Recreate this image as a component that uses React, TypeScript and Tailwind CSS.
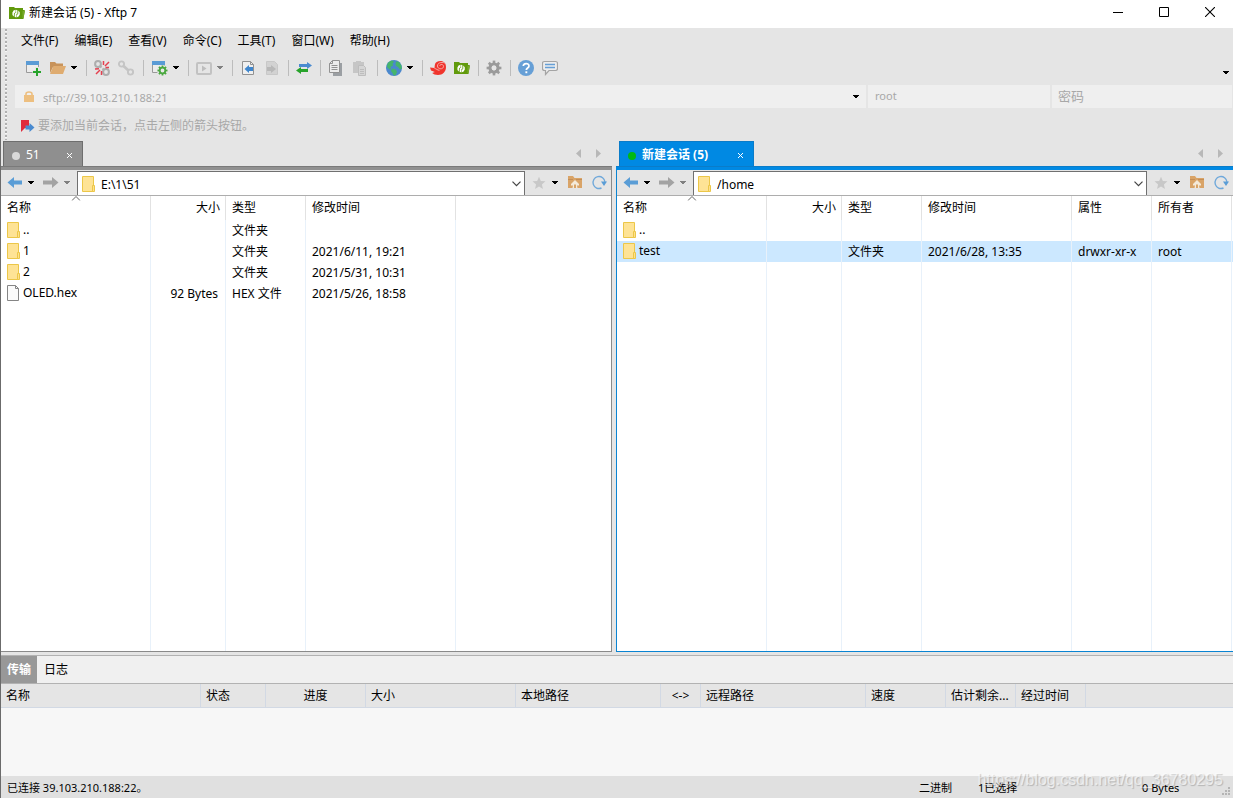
import React from "react";

type Children = { children?: React.ReactNode };

function Caret({ className = "text-black" }: { className?: string }) {
  return (
    <svg width="6" height="3" viewBox="0 0 6 3" className={className} aria-hidden="true" shapeRendering="crispEdges">
      <path d="M0 0h6v1H5v1H4v1H2V2H1V1H0z" fill="currentColor" />
    </svg>
  );
}

function Icon({ children, size = 16 }: Children & { size?: number }) {
  return (
    <svg width={size} height={size} viewBox="0 0 16 16" fill="none" aria-hidden="true">
      {children}
    </svg>
  );
}

const XftpIcon = () => (
  <Icon>
    <path d="M0 2h5l1 1h8v2h1.800L14.500 14H0z" fill="#619a0c" />
    <path d="M13.500 6h2.500l-1.500 7h-1z" fill="#76a92c" />
    <path d="M6.600 4.800a3.800 3.800 0 0 0-1.800 6.800l.2-3.400 1.600-1z" fill="#fff" />
    <path d="M7.500 12.400a3.800 3.800 0 0 0 1.800-6.900l-.1 3.500-1.700 1z" fill="#fff" />
    <path d="M5.700 12V8.500l1.300-1v4.800zM8.400 5.200v3.500l-1.300 1V4.800z" fill="#fff" />
  </Icon>
);

const NewSessionIcon = () => (
  <Icon>
    <path d="M.5 2.500h12v10H.5z" fill="#ececec" stroke="#9a9a9a" />
    <path d="M0 1h13v4H0z" fill="#5a9bd5" />
    <path d="M11 7v9M6.500 12h9" stroke="#e5e5e5" strokeWidth="4" />
    <path d="M11 8v8M7 12h8" stroke="#27a32b" strokeWidth="2" />
  </Icon>
);

const OpenIcon = () => (
  <Icon>
    <path d="M0 2h5l1.500 1.500H13V7H3L0 13z" fill="#c8935a" />
    <path d="M3.500 6H16l-3 8H0z" fill="#dfac70" />
  </Icon>
);

const BrokenLinkIcon = () => (
  <Icon>
    <circle cx="4" cy="4" r="2.900" stroke="#adadad" strokeWidth="2" />
    <path d="m6 6 1.500 1.500M8.500 8.500 10 10" stroke="#adadad" strokeWidth="2" />
    <circle cx="12" cy="12" r="2.900" stroke="#adadad" strokeWidth="2" />
    <path d="M9.500 1v4M15 2l-4 4M11.500 7.500H15M1 9l4-.3M2 14l4-4M7.500 11v4" stroke="#e4404f" strokeWidth="1.500" />
  </Icon>
);

const LinkIcon = () => (
  <Icon>
    <circle cx="3.500" cy="4" r="2.600" stroke="#c5c5c5" strokeWidth="1.900" />
    <path d="m5.500 6 5 4.500" stroke="#c5c5c5" strokeWidth="2.800" />
    <circle cx="12.500" cy="12" r="2.600" stroke="#c5c5c5" strokeWidth="1.900" />
  </Icon>
);

function Teeth({ cx, cy, r, color, width }: { cx: number; cy: number; r: number; color: string; width: number }) {
  return (
    <g stroke={color} strokeWidth={width}>
      {[0, 45, 90, 135].map((a) => (
        <path key={a} d={`M${cx - r} ${cy}h${r * 2}`} transform={`rotate(${a} ${cx} ${cy})`} />
      ))}
    </g>
  );
}

const SessionPropsIcon = () => (
  <Icon>
    <path d="M.5 2.500h12v10H.5z" fill="#ececec" stroke="#9a9a9a" />
    <path d="M0 1h13v4H0z" fill="#5a9bd5" />
    <circle cx="10.500" cy="10.500" r="5.500" fill="#e5e5e5" />
    <Teeth cx={10.5} cy={10.5} r={5} color="#4aa83f" width={1.8} />
    <circle cx="10.500" cy="10.500" r="2.800" fill="#e8e8e8" stroke="#4aa83f" strokeWidth="1.800" />
  </Icon>
);

const RunIcon = () => (
  <Icon>
    <rect x="1" y="3" width="14" height="11" rx="1" stroke="#c2c2c2" strokeWidth="2" />
    <path d="M6 5.500v6l4.500-3z" fill="#bdbdbd" />
  </Icon>
);

const PageLeftIcon = () => (
  <Icon>
    <path d="M2.500 1.500h8l3 3v10h-11z" fill="#efefef" stroke="#929292" />
    <path d="M10.500 1.500v3h3" stroke="#929292" />
    <path d="M9 5v2h4v4H9v2L4.500 9z" fill="#3f86cd" />
  </Icon>
);

const PageRightIcon = () => (
  <Icon>
    <path d="M2.500 1.500h8l3 3v10h-11z" fill="#d2d2d2" stroke="#c8c8c8" />
    <path d="M7 5v2H3v4h4v2l5-4z" fill="#b8b8b8" />
  </Icon>
);

const SyncIcon = () => (
  <Icon>
    <path d="M11 2 16 5.500 11 9V7H3V4h8z" fill="#4a8bd0" />
    <path d="M5 7 0 10.500 5 14v-2h7V9H5z" fill="#27a32b" />
  </Icon>
);

const CopyIcon = () => (
  <Icon>
    <path d="M5 3h9v13H5z" fill="#9b9fa3" />
    <path d="M4.500.5h7v12h-10v-9z" fill="#ececec" stroke="#929292" />
    <path d="M4.500.5v3h-3M3.500 5.500h6M3.500 7.500h6M3.500 9.500h6" stroke="#929292" />
  </Icon>
);

const PasteIcon = () => (
  <Icon>
    <path d="M1 2h3V1h5v1h3v11H1z" fill="#c6c6c6" />
    <path d="M6.500 5.500h5l2 2v8h-7z" fill="#d5d5d5" stroke="#bdbdbd" />
    <path d="M8 9.500h4M8 11.500h4M8 13.500h4" stroke="#bdbdbd" />
  </Icon>
);

const GlobeIcon = () => (
  <Icon>
    <circle cx="8" cy="8" r="8" fill="#4b88cd" />
    <path d="M1.500 3.500C3 1.500 5 .8 6.500.5L8 2 6.500 3.500l.5 2L4.500 7 5 9 3.500 9.500 1 7zM10 1.500l3 .3 2.500 4 .3 3L14 9.500 12 7 10 6 9.500 4zM6 8.500l4 1 1 2.500-1.500 3.500-2-.3L6.500 13 5 11z" fill="#45b56b" />
  </Icon>
);

const XshellIcon = () => (
  <Icon>
    <path d="M0 7.500 4.500 8 4.800 5C5.300 2 7.500 1 10.500 1 14 1 16 3.500 16 7c0 4.500-3.200 8-8 8-2.600 0-4.600-.8-5.800-2L4.800 12 1 10.500z" fill="#f0352d" />
    <path d="M15.300 3.500C13.500 1.600 7.500 2 7.500 6c0 3.600 6 3.800 6 .3 0-2.300-3.500-2.500-3.700-.5M4.500 8.500c2 .1 2.600 1.800 5 1.800" stroke="#f6aba7" />
  </Icon>
);

const GearIcon = () => (
  <Icon>
    <Teeth cx={8} cy={8} r={7.4} color="#9c9c9c" width={2.6} />
    <circle cx="8" cy="8" r="4" fill="#e5e5e5" stroke="#9a9a9a" strokeWidth="3.200" />
    <circle cx="8" cy="8" r="2.400" fill="#e5e5e5" />
  </Icon>
);

const HelpIcon = () => (
  <Icon>
    <circle cx="8" cy="8" r="8" fill="#669fd6" />
    <path d="M5.300 6.100C5.300 2.800 11 2.700 11 6c0 2-2.700 2-2.700 4" stroke="#fff" strokeWidth="1.700" />
    <path d="M7.400 11.300h1.900v1.900H7.400z" fill="#fff" />
  </Icon>
);

const ChatIcon = () => (
  <Icon>
    <path d="M2.500 1.500h11q2 0 2 2v5q0 2-2 2H7l-3.500 4v-4h-1q-2 0-2-2v-5q0-2 2-2z" fill="#ededed" stroke="#a4a4a4" strokeWidth="1.200" />
    <path d="M3 4.500h10M3 7.500h10" stroke="#669fd6" strokeWidth="1.600" />
  </Icon>
);

const ArrowIcon = ({ forward = false }: { forward?: boolean }) => (
  <Icon>
    {forward ? (
      <path d="M9 2v3.500H0v4h9V13l6.500-5.500z" fill="#a3a3a3" />
    ) : (
      <path d="M7 2v3.500h8v4H7V13L.5 7.500z" fill="#5a9dd6" />
    )}
  </Icon>
);

const StarIcon = () => (
  <Icon size={14}>
    <path d="m8 .8 2.100 4.900 5.300.4-4.100 3.500 1.300 5.200L8 12l-4.600 2.800 1.300-5.200L.6 6.100l5.300-.4z" fill="#c8c8c8" />
  </Icon>
);

const UpFolderIcon = () => (
  <Icon>
    <path d="M1 1h5l1.500 2H15v10H1z" fill="#d9a468" />
    <path d="M1 4.500h5M9 4.500h6" stroke="#c58e55" />
    <path d="M8 5 4 9v1.500h2L5.500 13H7V9.500h2V13h1.500L10 10.500h2V9z" fill="#f4ead9" />
  </Icon>
);

const RefreshIcon = () => (
  <Icon>
    <path d="M10.500 13A6 6 0 1 1 14 7" stroke="#6fa8da" strokeWidth="1.400" />
    <path d="M10 6.500h6L13 11z" fill="#5a9dd6" />
  </Icon>
);

const FolderIcon = () => (
  <svg width="14" height="16" viewBox="0 0 14 16" aria-hidden="true" className="shrink-0">
    <path d="M.5.5h11v15H.5z" fill="#fee395" stroke="#ecc748" />
    <path d="M10.500 9.500h2v6h-2z" fill="#fee08c" stroke="#ecc748" />
  </svg>
);

const FileIcon = () => (
  <svg width="14" height="16" viewBox="0 0 14 16" aria-hidden="true" className="shrink-0">
    <path d="M.5.5h8l3 3v12H.5z" fill="#fafafa" stroke="#858585" />
    <path d="M8.500.5v3h3" fill="none" stroke="#858585" />
  </svg>
);

const TriIcon = ({ right = false }: { right?: boolean }) => (
  <svg width="5" height="9" viewBox="0 0 5 9" aria-hidden="true">
    <path d={right ? "M0 0v9l5-4.500z" : "M5 0v9L0 4.500z"} fill="#b8b8b8" />
  </svg>
);

const CloseIcon = () => (
  <svg width="7" height="7" viewBox="0 0 7 7" aria-hidden="true">
    <path d="m1 1 5 5M6 1 1 6" stroke="#fff" />
  </svg>
);

const ChevronIcon = () => (
  <svg width="9" height="6" viewBox="0 0 9 6" fill="none" aria-hidden="true">
    <path d="m.5.7 4 4 4-4" stroke="#444" strokeWidth="1.200" />
  </svg>
);

const FlagIcon = () => (
  <svg width="14" height="14" viewBox="0 0 14 14" aria-hidden="true">
    <path d="M0 1h8v8H4l-4 4z" fill="#e02b3c" />
    <path d="M8.500 4v2.500H4.500v4h4V13l5-4.500z" fill="#4a8bd0" />
  </svg>
);

const LockIcon = () => (
  <svg width="10" height="11" viewBox="0 0 10 11" aria-hidden="true">
    <path d="M2 5V3q0-2 3-2t3 2v2" fill="none" stroke="#edbf80" strokeWidth="1.600" />
    <path d="M0 4h10v7H0z" fill="#edbf80" />
  </svg>
);

function ToolButton({ label, children }: Children & { label: string }) {
  return (
    <button aria-label={label} className="flex size-6 shrink-0 items-center justify-center">
      {children}
    </button>
  );
}

function MenuCaret({ label, dim = false }: { label: string; dim?: boolean }) {
  return (
    <button aria-label={label} className="flex h-6 w-3 shrink-0 items-center pl-px">
      <Caret className={dim ? "text-[#808080]" : "text-black"} />
    </button>
  );
}

const Separator = ({ wide = false }: { wide?: boolean }) => (
  <span className={`flex shrink-0 justify-center ${wide ? "w-2.5" : "w-2"}`}>
    <span className="h-4 w-px bg-[#bcbcbc]" />
  </span>
);

function Bar({ className, children }: Children & { className: string }) {
  return (
    <div className={`flex shrink-0 items-center pl-1 ${className}`}>
      <span className="my-px mr-2 w-[2px] self-stretch bg-[repeating-linear-gradient(to_bottom,#b0b0b0_0_2px,#f6f6f6_2px_3px,#e5e5e5_3px_4px)]" />
      {children}
    </div>
  );
}

type Column = { name: string; width: string; right?: boolean };
type Entry = { name: string; file?: boolean; selected?: boolean; cells: string[] };

const localColumns: Column[] = [
  { name: "名称", width: "w-[150px]" },
  { name: "大小", width: "w-[75px]", right: true },
  { name: "类型", width: "w-[80px]" },
  { name: "修改时间", width: "w-[150px]" },
];
const remoteColumns: Column[] = [
  ...localColumns,
  { name: "属性", width: "w-[80px]" },
  { name: "所有者", width: "w-[80px]" },
];
const localEntries: Entry[] = [
  { name: "..", cells: ["", "文件夹", ""] },
  { name: "1", cells: ["", "文件夹", "2021/6/11, 19:21"] },
  { name: "2", cells: ["", "文件夹", "2021/5/31, 10:31"] },
  { name: "OLED.hex", file: true, cells: ["92 Bytes", "HEX 文件", "2021/5/26, 18:58"] },
];
const remoteEntries: Entry[] = [
  { name: "..", cells: ["", "", "", "", ""] },
  { name: "test", selected: true, cells: ["", "文件夹", "2021/6/28, 13:35", "drwxr-xr-x", "root"] },
];

function FileTable({ columns, entries, spare }: { columns: Column[]; entries: Entry[]; spare?: boolean }) {
  return (
    <table className="h-full w-full table-fixed border-separate border-spacing-0">
      <colgroup>
        {columns.map((c) => (
          <col key={c.name} className={c.width} />
        ))}
        {spare && <col />}
      </colgroup>
      <thead>
        <tr className="h-6">
          {columns.map((c, i) => (
            <th
              key={c.name}
              className={`relative h-6 border-r border-[#e2e2e2] p-0 font-normal ${c.right ? "pr-[5px] text-right" : "pl-1.5 text-left"}`}
            >
              {c.name}
              {i === 0 && (
                <svg width="9" height="5" viewBox="0 0 9 5" fill="none" aria-hidden="true" className="absolute top-0 left-1/2 -translate-x-1/2">
                  <path d="m.5 4.500 4-4 4 4" stroke="#666" />
                </svg>
              )}
            </th>
          ))}
          {spare && <th className="p-0" />}
        </tr>
      </thead>
      <tbody>
        {entries.map((e) => (
          <tr key={e.name} className={`h-[21px] ${e.selected ? "bg-[#cce8ff]" : ""}`}>
            <td className="h-[21px] border-r border-[#e8f1fa] p-0">
              <div className="flex items-center gap-0.5 pb-px pl-1.5">
                {e.file ? <FileIcon /> : <FolderIcon />}
                {e.name}
              </div>
            </td>
            {e.cells.map((cell, i) => (
              <td key={i} className={`border-r border-[#e8f1fa] p-0 ${i === 0 ? "pr-[7px] text-right" : "pl-1.5"}`}>
                {cell}
              </td>
            ))}
            {spare && <td className="p-0" />}
          </tr>
        ))}
        <tr aria-hidden="true">
          {columns.map((c) => (
            <td key={c.name} className="border-r border-[#e8f1fa] p-0" />
          ))}
          {spare && <td className="p-0" />}
        </tr>
      </tbody>
    </table>
  );
}

type PaneProps = { title: string; path: string; columns: Column[]; entries: Entry[]; active?: boolean };

function Pane({ title, path, columns, entries, active = false }: PaneProps) {
  return (
    <section className="flex min-h-0 min-w-0 flex-col">
      <div className={`flex h-[25px] shrink-0 items-center ${active ? "pl-[3px]" : "pl-0.5"}`}>
        <div
          className={`flex h-full items-center border border-b-0 pr-[9px] pl-2 text-white ${
            active ? "w-[135px] border-[#0a7cc9] bg-[#0089e3] font-bold" : "w-20 border-[#6e6e6e] bg-[#8f8f8f]"
          }`}
        >
          <span className={`mt-1 mr-1.5 size-2 rounded-full ${active ? "bg-[#00b913]" : "bg-[#d9d9d9]"}`} />
          <button role="tab" aria-selected={active} className="flex-1 pt-px text-left whitespace-nowrap">
            {title}
          </button>
          <button aria-label="关闭" className="pt-0.5">
            <CloseIcon />
          </button>
        </div>
        <span className="flex-1" />
        <button aria-label="上一个标签" className="flex h-6 w-5 items-center justify-center">
          <TriIcon />
        </button>
        <button aria-label="下一个标签" className={`flex h-6 w-5 items-center justify-center ${active ? "mr-[3px]" : "mr-1"}`}>
          <TriIcon right />
        </button>
      </div>
      <div className={`h-1 shrink-0 border-t ${active ? "border-[#0a7cc9] bg-[#0089e3]" : "border-[#7a7a7a] bg-[#909090]"}`} />
      <div
        className={`flex min-h-0 flex-1 flex-col border-b bg-white ${
          active ? "border-l border-[#0a84d2]" : "border-r border-[#8a8a8a]"
        }`}
      >
        <div className="flex h-[26px] shrink-0 items-center border-b border-[#adadad] bg-[#e5e5e5] pl-0.5">
          <ToolButton label="后退">
            <ArrowIcon />
          </ToolButton>
          <MenuCaret label="后退历史" />
          <ToolButton label="前进">
            <ArrowIcon forward />
          </ToolButton>
          <MenuCaret label="前进历史" dim />
          <div className="ml-0.5 flex min-w-0 flex-1 items-center self-stretch border border-b-0 border-[#707070] bg-white mt-px pl-1">
            <FolderIcon />
            <input aria-label="路径" defaultValue={path} className="ml-[5px] h-5 min-w-0 flex-1 bg-transparent pt-px outline-none" />
            <button aria-label="路径列表" className="flex h-5 w-4 items-center justify-center pt-px">
              <ChevronIcon />
            </button>
          </div>
          <span className="w-0.5" />
          <ToolButton label="书签">
            <StarIcon />
          </ToolButton>
          <MenuCaret label="书签列表" />
          <ToolButton label="上级目录">
            <UpFolderIcon />
          </ToolButton>
          <ToolButton label="刷新">
            <RefreshIcon />
          </ToolButton>
        </div>
        <div className="min-h-0 flex-1">
          <FileTable columns={columns} entries={entries} spare />
        </div>
      </div>
    </section>
  );
}

const menus = ["文件(F)", "编辑(E)", "查看(V)", "命令(C)", "工具(T)", "窗口(W)", "帮助(H)"];

const transferColumns = [
  { name: "名称", width: "w-[200px]" },
  { name: "状态", width: "w-[65px]" },
  { name: "进度", width: "w-[100px]", center: true },
  { name: "大小", width: "w-[150px]" },
  { name: "本地路径", width: "w-[145px]" },
  { name: "<->", width: "w-[40px]", center: true },
  { name: "远程路径", width: "w-[165px]" },
  { name: "速度", width: "w-[80px]" },
  { name: "估计剩余...", width: "w-[70px]" },
  { name: "经过时间", width: "w-[70px]" },
];

export default function App() {
  return (
    <div className="relative flex h-screen flex-col overflow-hidden border-l border-[#6b6b6b] bg-[#e5e5e5] font-['Noto_Sans','Noto_Sans_CJK_SC',sans-serif] text-[12px] leading-4 text-black">
      <header className="flex h-7 shrink-0 items-center bg-white pl-2">
        <span className="pb-0.5">
          <XftpIcon />
        </span>
        <h1 className="ml-1 flex-1 pb-0.5">新建会话 (5) - Xftp 7</h1>
        <button aria-label="最小化" className="flex h-7 w-[46px] items-center justify-center pb-1">
          <svg width="10" height="10" viewBox="0 0 10 10"><path d="M0 5.500h10" stroke="#000" /></svg>
        </button>
        <button aria-label="最大化" className="flex h-7 w-[46px] items-center justify-center pb-1">
          <svg width="10" height="10" viewBox="0 0 10 10"><path d="M.5.5h9v9h-9z" fill="none" stroke="#000" /></svg>
        </button>
        <button aria-label="关闭窗口" className="flex h-7 w-[46px] items-center justify-center pb-1">
          <svg width="10" height="10" viewBox="0 0 10 10"><path d="m0 0 10 10M10 0 0 10" stroke="#000" strokeWidth="1.100" /></svg>
        </button>
      </header>

      <Bar className="h-[26px]">
        <nav className="flex gap-4 pl-1.5">
          {menus.map((m) => (
            <button key={m} className="whitespace-nowrap">
              {m}
            </button>
          ))}
        </nav>
      </Bar>

      <Bar className="h-[29px]">
        <div role="toolbar" aria-label="工具栏" className="flex flex-1 items-center pb-0.5 pl-[7px]">
          <ToolButton label="新建"><NewSessionIcon /></ToolButton>
          <ToolButton label="打开"><OpenIcon /></ToolButton>
          <MenuCaret label="打开列表" />
          <Separator />
          <ToolButton label="断开"><BrokenLinkIcon /></ToolButton>
          <ToolButton label="重新连接"><LinkIcon /></ToolButton>
          <Separator wide />
          <ToolButton label="属性"><SessionPropsIcon /></ToolButton>
          <MenuCaret label="属性列表" />
          <Separator />
          <ToolButton label="运行"><RunIcon /></ToolButton>
          <MenuCaret label="运行列表" dim />
          <Separator />
          <ToolButton label="下载"><PageLeftIcon /></ToolButton>
          <ToolButton label="上传"><PageRightIcon /></ToolButton>
          <Separator />
          <ToolButton label="同步"><SyncIcon /></ToolButton>
          <Separator />
          <ToolButton label="复制"><CopyIcon /></ToolButton>
          <ToolButton label="粘贴"><PasteIcon /></ToolButton>
          <Separator wide />
          <ToolButton label="编码"><GlobeIcon /></ToolButton>
          <MenuCaret label="编码列表" />
          <Separator />
          <ToolButton label="Xshell"><XshellIcon /></ToolButton>
          <ToolButton label="Xftp"><XftpIcon /></ToolButton>
          <Separator />
          <ToolButton label="选项"><GearIcon /></ToolButton>
          <Separator />
          <ToolButton label="帮助"><HelpIcon /></ToolButton>
          <ToolButton label="反馈"><ChatIcon /></ToolButton>
          <span className="flex-1" />
          <button aria-label="更多" className="mr-1 pt-2.5">
            <Caret />
          </button>
        </div>
      </Bar>

      <Bar className="h-[27px]">
        <div className="mr-px flex h-[23px] flex-1 gap-0.5 text-[#a8a8a8]">
          <div className="flex min-w-0 flex-1 items-center bg-[#efefef] pr-[7px] pl-[9px]">
            <LockIcon />
            <input aria-label="主机" placeholder="sftp://39.103.210.188:21" className="ml-[9px] h-5 min-w-0 flex-1 pt-0.5 text-[11px] outline-none placeholder:text-[#a8a8a8]" />
            <button aria-label="主机列表">
              <Caret />
            </button>
          </div>
          <input aria-label="用户名" placeholder="root" className="w-[182px] bg-[#efefef] px-[7px] pb-px text-[11px] outline-none placeholder:text-[#a8a8a8]" />
          <input aria-label="密码" type="password" placeholder="密码" className="w-[180px] bg-[#efefef] px-1.5 pb-px text-[13px] outline-none placeholder:text-[#a8a8a8]" />
        </div>
      </Bar>

      <Bar className="h-[31px]">
        <button aria-label="添加当前会话" className="ml-1.5">
          <FlagIcon />
        </button>
        <p className="ml-[3px] text-[#a8a8a8]">要添加当前会话，点击左侧的箭头按钮。</p>
      </Bar>

      <main className="grid min-h-0 flex-1 grid-cols-[minmax(0,611fr)_minmax(0,617fr)] gap-1">
        <Pane title="51" path="E:\1\51" columns={localColumns} entries={localEntries} />
        <Pane title="新建会话 (5)" path="/home" columns={remoteColumns} entries={remoteEntries} active />
      </main>

      <section className="mt-[3px] flex h-[121px] shrink-0 flex-col border-t border-[#b2b2b2] bg-[#f7f7f7]">
        <div role="tablist" className="flex h-7 shrink-0 border-b border-[#b2b2b2] bg-[#f0f0f0]">
          <button role="tab" aria-selected="true" className="w-9 bg-[#989898] text-center font-bold text-white">
            传输
          </button>
          <button role="tab" aria-selected="false" className="px-[7px]">
            日志
          </button>
        </div>
        <table className="w-full table-fixed border-separate border-spacing-0 bg-[#e5e5e5]">
          <colgroup>
            {transferColumns.map((c) => (
              <col key={c.name} className={c.width} />
            ))}
            <col />
          </colgroup>
          <thead>
            <tr>
              {transferColumns.map((c) => (
                <th
                  key={c.name}
                  className={`h-6 border-r border-b border-[#d2d9e4] p-0 font-normal whitespace-nowrap ${c.center ? "text-center" : "pl-[5px] text-left"}`}
                >
                  {c.name}
                </th>
              ))}
              <th className="border-b border-[#d2d9e4] p-0" />
            </tr>
          </thead>
        </table>
      </section>

      <footer className="flex h-[22px] shrink-0 items-center bg-[#e0e0e0] pt-0.5 pl-1.5 text-[11px]">
        <span className="flex-1">已连接 39.103.210.188:22。</span>
        <span className="w-[59px]">二进制</span>
        <span className="w-[164px]">1已选择</span>
        <span className="w-20">0 Bytes</span>
        <svg width="9" height="9" viewBox="0 0 9 9" aria-hidden="true" className="mt-1.5 mr-0.5" shapeRendering="crispEdges">
          <path d="M6 0h2v2H6zM6 3h2v2H6zM6 6h2v2H6zM3 3h2v2H3zM3 6h2v2H3zM0 6h2v2H0z" fill="#b4b4b4" />
        </svg>
      </footer>

      <p className="pointer-events-none absolute right-2.5 bottom-2.5 font-['Liberation_Sans',sans-serif] text-[16px] text-white/60 [text-shadow:1px_1px_1px_rgb(0_0_0/0.2)]">
        https://blog.csdn.net/qq_36780295
      </p>
    </div>
  );
}
